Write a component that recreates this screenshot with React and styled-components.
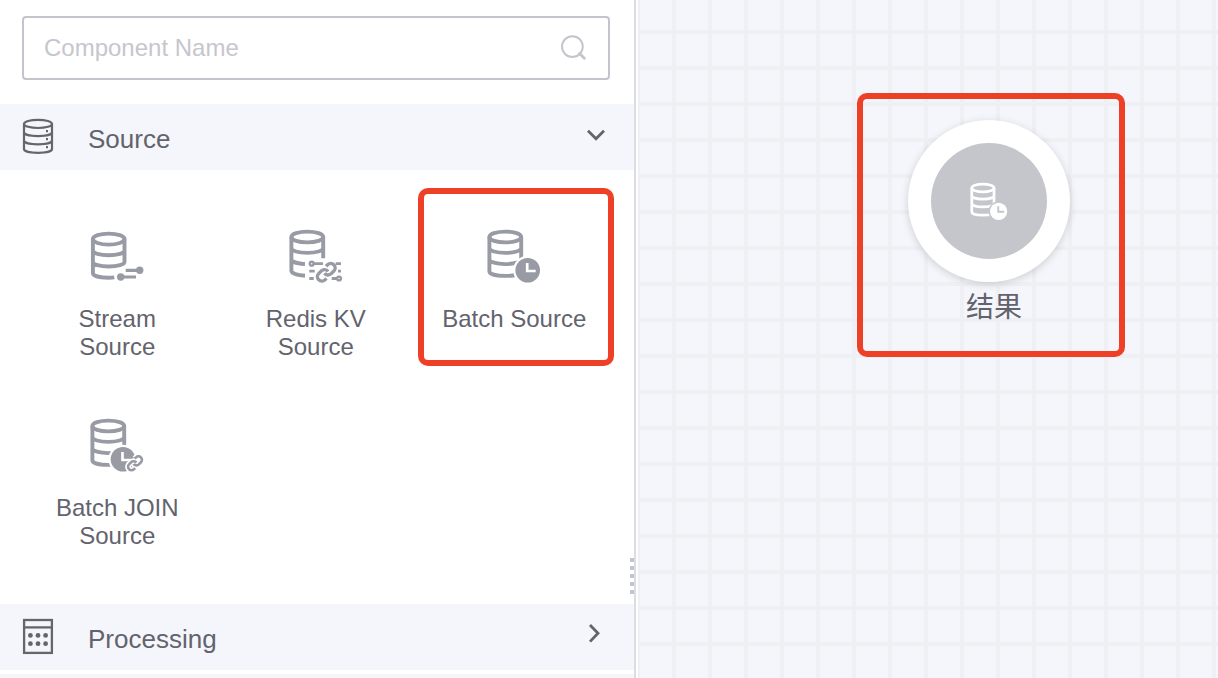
import React, { useId } from "react";
import styled, { createGlobalStyle } from "styled-components";

const GlobalStyle = createGlobalStyle`
  * { box-sizing: border-box; }
  body {
    margin: 0;
    background: #fff;
    font-family: "Liberation Sans", "Noto Sans CJK SC", sans-serif;
    color: #63636d;
    overflow: hidden;
  }
`;

const Page = styled.div`
  display: flex;
  width: 1218px;
  height: 678px;
  overflow: hidden;
`;

const Sidebar = styled.aside`
  position: relative;
  flex: none;
  width: 636px;
  height: 678px;
  overflow: hidden;
  border-right: 2px solid #dcdce5;
  background: #fff;
`;

const SearchBox = styled.label`
  display: flex;
  align-items: center;
  width: 588px;
  height: 64px;
  margin: 16px 0 24px 22px;
  padding: 0 21.6px 0 20px;
  border: 2px solid #c4c4cc;
  border-radius: 4px;
`;

const SearchText = styled.span`
  flex: 1;
  font-size: 24px;
  line-height: 28px;
  color: #c6c6cd;
`;

const SectionHeader = styled.header`
  display: flex;
  height: 66px;
  padding: 14px 28px 0 22px;
  background: #f5f6fb;
`;

const SectionTitle = styled.h2`
  flex: 1;
  margin: 6px 0 0 34px;
  font-size: 26px;
  font-weight: 400;
  line-height: 30px;
`;

const ComponentGrid = styled.div`
  display: grid;
  grid-template-columns: repeat(3, 198.5px);
  grid-auto-rows: 189px;
  height: 434px;
  padding: 18px 0 0 18px;
`;

const ComponentCard = styled.div`
  position: relative;
  display: flex;
  flex-direction: column;
  align-items: center;
  gap: 18px;
  padding-top: 39px;
`;

const CardLabel = styled.div`
  max-width: 150px;
  font-size: 24px;
  line-height: 28px;
  text-align: center;
`;

const NextSection = styled.div`
  height: 4px;
  margin-top: 4px;
  background: #f5f6fb;
`;

const Highlight = styled.div`
  position: absolute;
  left: ${(p) => p.$x}px;
  top: ${(p) => p.$y}px;
  width: ${(p) => p.$w}px;
  height: ${(p) => p.$h}px;
  border: 6px solid #ee4026;
  border-radius: 10px;
  pointer-events: none;
`;

const DragHandle = styled.div`
  position: absolute;
  right: 0;
  top: 558px;
  display: grid;
  gap: 4px;
`;

const Dot = styled.i`
  width: 4px;
  height: 4px;
  background: #c4c4cc;
`;

const Canvas = styled.main`
  position: relative;
  flex: 1;
  margin-left: 2px;
  background-color: #f5f6fb;
  background-image: linear-gradient(90deg, #eff0f4 4px, transparent 4px),
    linear-gradient(#eff0f4 4px, transparent 4px);
  background-size: 36px 36px;
  background-position: -2px -6px;
`;

const Node = styled.div`
  position: absolute;
  left: 270px;
  top: 120px;
  display: flex;
  flex-direction: column;
  align-items: center;
  width: 162px;
`;

const NodeRing = styled.div`
  display: flex;
  align-items: center;
  justify-content: center;
  width: 162px;
  height: 162px;
  border-radius: 50%;
  background: #fff;
  box-shadow: 0 2px 8px rgba(0, 0, 0, 0.16);
`;

const NodeCore = styled.div`
  display: flex;
  width: 116px;
  height: 116px;
  padding: 38px 0 0 37px;
  border-radius: 50%;
  background: #c5c6cb;
`;

const NodeLabel = styled.div`
  margin: 3px 0 0 10px;
  font-family: "Noto Sans CJK SC", sans-serif;
  font-size: 28px;
  font-weight: 400;
  line-height: 40px;
`;

const Glyph = styled.svg`
  flex: none;
  display: block;
  fill: none;
`;

function SearchIcon() {
  return (
    <Glyph width="28" height="28" viewBox="0 0 28 28" stroke="#c4c4cc" strokeLinecap="round">
      <circle cx="14.4" cy="12.6" r="10.4" strokeWidth="1.9" />
      <path d="M21.6 19.6l4.7 4.6" strokeWidth="2.8" />
    </Glyph>
  );
}

function SourceIcon() {
  return (
    <Glyph width="32" height="38" viewBox="0 0 32 38" stroke="#65656e" strokeWidth="2.2">
      <ellipse cx="16" cy="5.9" rx="14" ry="4.1" />
      <path d="M2 5.9V31c0 2.2 6.3 3.8 14 3.8s14-1.6 14-3.8V5.9M2 14.3c0 2.2 6.3 3.8 14 3.8s14-1.6 14-3.8M2 22.6c0 2.2 6.3 3.8 14 3.8s14-1.6 14-3.8" />
      <path d="M25 12v2.2M25 20v2.2M25 28.1v2.2" strokeWidth="2" />
    </Glyph>
  );
}

function ProcessingIcon() {
  return (
    <Glyph width="32" height="38" viewBox="0 0 32 38" stroke="#65656e" strokeWidth="2.3">
      <rect x="2.1" y="2" width="27.8" height="32.9" />
      <path d="M2 9.4h28" />
      <g fill="#65656e" stroke="none">
        {[17.4, 25.7].map((y) => [8.4, 16, 23.6].map((x) => <circle key={x + y} cx={x} cy={y} r="2.4" />))}
      </g>
    </Glyph>
  );
}

function Chevron({ open }) {
  return (
    <Glyph width="20" height="34" viewBox="0 0 20 34" stroke="#63636d" strokeWidth="2.8">
      <path d={open ? "M2 12.7l8 8 8-8" : "M4 7l8 8.3-8 8.3"} />
    </Glyph>
  );
}

function ChainLink({ transform, width }) {
  return (
    <g transform={transform} strokeWidth={width}>
      <path d="M10 13a5 5 0 0 0 7.54.54l3-3a5 5 0 0 0-7.07-7.07l-1.72 1.71" />
      <path d="M14 11a5 5 0 0 0-7.54-.54l-3 3a5 5 0 0 0 7.07 7.07l1.71-1.71" />
    </g>
  );
}

const CYLINDER =
  "M5.4 10V44.2c0 2.8 7 4.7 16 4.7s15.8-1.9 15.8-4.7M37.2 10V32M5.4 21c0 2.8 7 4.9 15.9 4.9S37.2 23.8 37.2 21M5.4 32.2c0 2.8 7 4.9 15.9 4.9S37.2 35 37.2 32.2";

function DatabaseIcon({ kind, size = 60, color = "#989aa4" }) {
  const id = useId();
  const mask = `url(#${id})`;
  const smallChain = "translate(39.6 38.9) scale(.7)";
  return (
    <Glyph width={size} height={size} viewBox="0 0 60 60" stroke={color} strokeWidth="3.9">
      <mask id={id} maskUnits="userSpaceOnUse" x="0" y="0" width="60" height="60">
        <rect width="60" height="60" fill="#fff" stroke="none" />
        {kind === "batch" && <circle cx="43.7" cy="43.3" r="14.5" fill="#000" stroke="none" />}
        {kind === "join" && <circle cx="36" cy="43.3" r="14.5" fill="#000" stroke="none" />}
      </mask>
      {kind === "stream" && (
        <>
          <ellipse cx="21.7" cy="12.1" rx="15.8" ry="5.5" />
          <path d="M5.9 12V46c0 2.8 7 4.7 15.8 4.7 2 0 4-.1 5.6-.3M37.5 12V35c0 2.5-7 4.5-15.8 4.5S5.9 37.5 5.9 35M5.9 23.5c0 2.5 7 4.7 15.8 4.7s15.8-2.2 15.8-4.7" />
          <path d="M38.7 43.4H52M34 50h15" strokeWidth="3.2" />
          <circle cx="52.7" cy="43.3" r="3.7" fill={color} stroke="none" />
          <circle cx="33.7" cy="50" r="3.7" fill={color} stroke="none" />
        </>
      )}
      {kind === "redis" && (
        <>
          <ellipse cx="21.3" cy="10" rx="15.9" ry="5.4" />
          <path d="M5.4 10V43.8c0 2.6 6 4.4 13.6 5M37.2 10V31.3M5.4 21c0 2.8 7 4.9 15.9 4.9S37.2 23.8 37.2 21M5.4 32.2c0 2.5 6 4.5 13.6 4.9" />
          <circle cx="25.7" cy="36.7" r="1.9" strokeWidth="2.4" />
          <path d="M28 36.7h9M49.7 36.7H55M23.3 44.2h5.4M52 44.2h3M23.3 51.5h4.4M45.7 51.5H51" strokeWidth="2.8" />
          <circle cx="53" cy="51.5" r="1.9" strokeWidth="2.4" />
          <ChainLink transform="translate(29.6 34.6) scale(.89)" width="3.8" />
        </>
      )}
      {(kind === "batch" || kind === "join") && (
        <g mask={mask}>
          <ellipse cx="21.3" cy="10" rx="15.9" ry="5.4" />
          <path d={CYLINDER} />
        </g>
      )}
      {kind === "batch" && <ClockFace cx={43.7} color={color} id={id + "c"} />}
      {kind === "join" && (
        <>
          <mask id={id + "j"} maskUnits="userSpaceOnUse" x="0" y="0" width="60" height="60">
            <rect width="60" height="60" fill="#fff" stroke="none" />
            <g stroke="#000"><ChainLink transform={smallChain} width="8.4" /></g>
          </mask>
          <g mask={`url(#${id}j)`}><ClockFace cx={36} color={color} id={id + "c"} /></g>
          <ChainLink transform={smallChain} width="3.7" />
        </>
      )}
    </Glyph>
  );
}

function ClockFace({ cx, color, id }) {
  return (
    <>
      <mask id={id} maskUnits="userSpaceOnUse" x="0" y="0" width="60" height="60">
        <rect width="60" height="60" fill="#fff" stroke="none" />
        <path d={`M${cx - 0.5} 36v8h8.5`} stroke="#000" strokeWidth="2.7" />
      </mask>
      <circle cx={cx} cy="43.3" r="12.3" fill={color} stroke="none" mask={`url(#${id})`} />
    </>
  );
}

const COMPONENTS = [
  { kind: "stream", label: "Stream Source" },
  { kind: "redis", label: "Redis KV Source" },
  { kind: "batch", label: "Batch Source", highlighted: true },
  { kind: "join", label: "Batch JOIN Source" },
];

export default function App() {
  return (
    <Page>
      <GlobalStyle />
      <Sidebar>
        <SearchBox>
          <SearchText>Component Name</SearchText>
          <SearchIcon />
        </SearchBox>
        <SectionHeader>
          <SourceIcon />
          <SectionTitle>Source</SectionTitle>
          <Chevron open />
        </SectionHeader>
        <ComponentGrid>
          {COMPONENTS.map((c) => (
            <ComponentCard key={c.kind}>
              <DatabaseIcon kind={c.kind} />
              <CardLabel>{c.label}</CardLabel>
              {c.highlighted && <Highlight $x={3} $y={0} $w={196} $h={178} />}
            </ComponentCard>
          ))}
        </ComponentGrid>
        <SectionHeader>
          <ProcessingIcon />
          <SectionTitle>Processing</SectionTitle>
          <Chevron />
        </SectionHeader>
        <NextSection />
        <DragHandle>
          {[0, 1, 2, 3, 4].map((n) => <Dot key={n} />)}
        </DragHandle>
      </Sidebar>
      <Canvas>
        <Node>
          <NodeRing>
            <NodeCore>
              <DatabaseIcon kind="batch" size={42} color="#fff" />
            </NodeCore>
          </NodeRing>
          <NodeLabel>结果</NodeLabel>
        </Node>
        <Highlight $x={219} $y={93} $w={268} $h={264} />
      </Canvas>
    </Page>
  );
}
